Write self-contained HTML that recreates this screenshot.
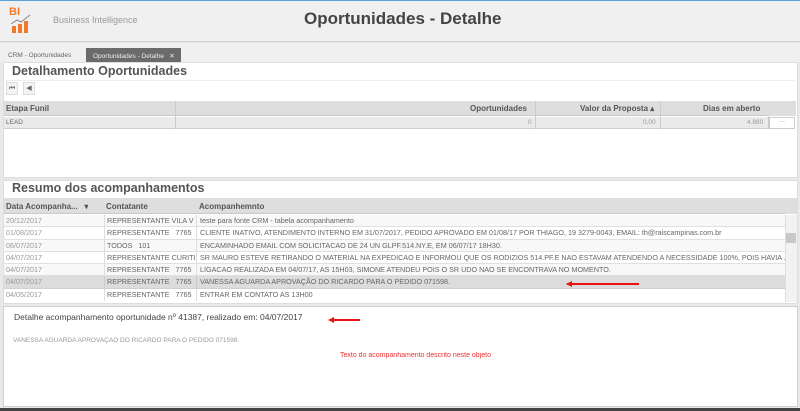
<!DOCTYPE html>
<html><head><meta charset="utf-8"><style>
*{margin:0;padding:0;box-sizing:border-box}
body{width:800px;height:411px;overflow:hidden;background:#e9e9e9;font-family:"Liberation Sans",sans-serif;position:relative;color:#666}
.a{position:absolute}
.t{font-size:7.5px;white-space:nowrap;overflow:hidden}
.r{display:flex;line-height:12px;white-space:nowrap;overflow:hidden}
.r span{overflow:hidden;flex-shrink:0}
.r span:last-child{flex-shrink:1;min-width:0}
</style></head><body>
<div class="a" style="left:0;top:0;width:800px;height:42px;background:#f0f0f0;border-top:1px solid #5aa0d8;border-bottom:1px solid #d0d0d0"></div>
<div class="a" style="left:9px;top:6px;font-size:11px;font-weight:bold;color:#f07a2a">BI</div>
<svg class="a" style="left:10px;top:12px" width="22" height="22" viewBox="0 0 22 22"><rect x="2" y="14" width="4" height="7" fill="#f07a2a"/><rect x="8" y="12" width="4" height="9" fill="#f07a2a"/><rect x="14" y="9" width="4" height="12" fill="#f07a2a"/><polyline points="1,12 7,8 11,10 20,3" fill="none" stroke="#888" stroke-width="1"/></svg>
<div class="a" style="left:53px;top:15px;font-size:9px;color:#999">Business Intelligence</div>
<div class="a" style="left:304px;top:9px;font-size:17px;font-weight:bold;color:#444">Oportunidades - Detalhe</div>
<div class="a" style="left:0;top:43px;width:800px;height:19px;background:#f0f0f0"></div>
<div class="a t" style="left:8px;top:52px;font-size:6.5px">CRM - Oportunidades</div>
<div class="a" style="left:86px;top:48px;width:95px;height:14px;background:#6b6b6b"></div>
<div class="a t" style="left:93px;top:52px;font-size:6.5px;color:#eee">Oportunidades - Detalhe &nbsp;&nbsp;✕</div>
<!-- panel1 -->
<div class="a" style="left:3px;top:62px;width:795px;height:116px;background:#fff;border:1px solid #ddd"></div>
<div class="a" style="left:12px;top:64px;font-size:12.5px;font-weight:bold;color:#555">Detalhamento Oportunidades</div>
<div class="a" style="left:5px;top:80px;width:790px;height:1px;background:#eee"></div>
<div class="a" style="left:6px;top:82px;width:12px;height:13px;border:1px solid #ddd;background:#f4f4f4;font-size:7px;text-align:center;line-height:11px">⏮</div>
<div class="a" style="left:23px;top:82px;width:12px;height:13px;border:1px solid #ddd;background:#f4f4f4;font-size:7px;text-align:center;line-height:11px">◀</div>
<div class="a" style="left:4px;top:101px;width:765px;height:15px;background:#dedede;border-bottom:1px solid #c8c8c8"></div>
<div class="a" style="left:4px;top:117px;width:765px;height:12px;background:#eaeaea;border-bottom:1px solid #d0d0d0"></div>
<div class="a" style="left:175px;top:101px;width:1px;height:28px;background:#ccc"></div>
<div class="a" style="left:535px;top:101px;width:1px;height:28px;background:#ccc"></div>
<div class="a" style="left:660px;top:101px;width:1px;height:28px;background:#ccc"></div>
<div class="a" style="left:768px;top:101px;width:1px;height:28px;background:#ccc"></div>
<div class="a" style="left:768px;top:101px;width:28px;height:15px;background:#dedede"></div>
<div class="a t" style="left:6px;top:104px;font-size:8px;font-weight:bold;color:#555">Etapa Funil</div>
<div class="a t" style="left:470px;top:104px;font-size:8px;font-weight:bold;color:#555">Oportunidades</div>
<div class="a t" style="left:580px;top:104px;font-size:8px;font-weight:bold;color:#555">Valor da Proposta ▴</div>
<div class="a t" style="left:703px;top:104px;font-size:8px;font-weight:bold;color:#555">Dias em aberto</div>
<div class="a t" style="left:6px;top:119px;font-size:6.5px">LEAD</div>
<div class="a t" style="left:528px;top:119px;font-size:6.5px;color:#999">0</div>
<div class="a t" style="left:643px;top:119px;font-size:6.5px;color:#999">0,00</div>
<div class="a t" style="left:747px;top:119px;font-size:6.5px;color:#999">4.880</div>
<div class="a" style="left:769px;top:117px;width:26px;height:12px;border:1px solid #ccc;background:#fff;font-size:6px;text-align:center;line-height:8px">···</div>
<!-- panel2 -->
<div class="a" style="left:3px;top:180px;width:795px;height:124px;background:#fff;border:1px solid #ddd"></div>
<div class="a" style="left:12px;top:181px;font-size:12.5px;font-weight:bold;color:#555">Resumo dos acompanhamentos</div>
<div class="a" style="left:4px;top:198px;width:781px;height:16px;background:#dedede;border-bottom:1px solid #c8c8c8"></div>
<div class="a" style="left:785px;top:198px;width:12px;height:16px;background:#dedede"></div>
<div class="a t" style="left:6px;top:202px;font-size:8px;font-weight:bold;color:#555">Data Acompanha... &nbsp;&nbsp;▾</div>
<div class="a t" style="left:106px;top:202px;font-size:8px;font-weight:bold;color:#555">Contatante</div>
<div class="a t" style="left:199px;top:202px;font-size:8px;font-weight:bold;color:#555">Acompanhemnto</div>
<div class="a" style="left:4px;top:215px;width:781px;height:87px;font-size:7.2px">
<div class="r" style="height:12.3px;border-bottom:1px solid #e0e0e0;background:#f8f8f8"><span style="width:100px;padding-left:2px;color:#999">20/12/2017</span><span style="width:92px;padding-left:2px;border-left:1px solid #ddd">REPRESENTANTE VILA V</span><span style="padding-left:3px;border-left:1px solid #ddd">teste para fonte CRM - tabela acompanhamento</span></div>
<div class="r" style="height:12.3px;border-bottom:1px solid #e0e0e0;background:#fff"><span style="width:100px;padding-left:2px;color:#999">01/08/2017</span><span style="width:92px;padding-left:2px;border-left:1px solid #ddd">REPRESENTANTE &nbsp; 7765</span><span style="padding-left:3px;border-left:1px solid #ddd">CLIENTE INATIVO, ATENDIMENTO INTERNO EM 31/07/2017, PEDIDO APROVADO EM 01/08/17 POR THIAGO, 19 3279-0043, EMAIL: th@raiscampinas.com.br</span></div>
<div class="r" style="height:12.3px;border-bottom:1px solid #e0e0e0;background:#f8f8f8"><span style="width:100px;padding-left:2px;color:#999">06/07/2017</span><span style="width:92px;padding-left:2px;border-left:1px solid #ddd">TODOS &nbsp; 101</span><span style="padding-left:3px;border-left:1px solid #ddd">ENCAMINHADO EMAIL COM SOLICITACAO DE 24 UN GLPF.514.NY.E, EM 06/07/17 18H30.</span></div>
<div class="r" style="height:12.3px;border-bottom:1px solid #e0e0e0;background:#fff"><span style="width:100px;padding-left:2px;color:#999">04/07/2017</span><span style="width:92px;padding-left:2px;border-left:1px solid #ddd">REPRESENTANTE CURITI</span><span style="padding-left:3px;border-left:1px solid #ddd">SR MAURO ESTEVE RETIRANDO O MATERIAL NA EXPEDICAO E INFORMOU QUE OS RODIZIOS 514.PF.E NAO ESTAVAM ATENDENDO A NECESSIDADE 100%, POIS HAVIA ...</span></div>
<div class="r" style="height:12.3px;border-bottom:1px solid #e0e0e0;background:#f8f8f8"><span style="width:100px;padding-left:2px;color:#999">04/07/2017</span><span style="width:92px;padding-left:2px;border-left:1px solid #ddd">REPRESENTANTE &nbsp; 7765</span><span style="padding-left:3px;border-left:1px solid #ddd">LIGACAO REALIZADA EM 04/07/17, AS 15H03, SIMONE ATENDEU POIS O SR UDO NAO SE ENCONTRAVA NO MOMENTO.</span></div>
<div class="r" style="height:13px;border-bottom:1px solid #d0d0d0;background:#dcdcdc"><span style="width:100px;padding-left:2px;color:#999">04/07/2017</span><span style="width:92px;padding-left:2px;border-left:1px solid #ccc">REPRESENTANTE &nbsp; 7765</span><span style="padding-left:3px;border-left:1px solid #ccc">VANESSA AGUARDA APROVAÇÃO DO RICARDO PARA O PEDIDO 071598.</span></div>
<div class="r" style="height:12px;background:#fff"><span style="width:100px;padding-left:2px;color:#999">04/05/2017</span><span style="width:92px;padding-left:2px;border-left:1px solid #ddd">REPRESENTANTE &nbsp; 7765</span><span style="padding-left:3px;border-left:1px solid #ddd">ENTRAR EM CONTATO AS 13H00</span></div>
</div>
<div class="a" style="left:785px;top:215px;width:12px;height:87px;background:#f2f2f2;border-left:1px solid #ddd"></div>
<div class="a" style="left:786px;top:233px;width:10px;height:10px;background:#c8c8c8"></div>
<div class="a" style="left:567px;top:283px;width:72px;height:1.5px;background:#e11"></div>
<div class="a" style="left:566px;top:281px;width:0;height:0;border-top:3px solid transparent;border-bottom:3px solid transparent;border-right:6px solid #e11"></div>
<!-- panel3 -->
<div class="a" style="left:3px;top:306px;width:795px;height:101px;background:#fff;border:1px solid #d0d0d0"></div>
<div class="a t" style="left:14px;top:312px;font-size:8.5px;color:#444">Detalhe acompanhamento oportunidade nº 41387, realizado em: 04/07/2017</div>
<div class="a" style="left:330px;top:319px;width:30px;height:1.5px;background:#e11"></div>
<div class="a" style="left:328px;top:317px;width:0;height:0;border-top:3px solid transparent;border-bottom:3px solid transparent;border-right:6px solid #e11"></div>
<div class="a t" style="left:13px;top:337px;font-size:6.5px;color:#999">VANESSA AGUARDA APROVAÇÃO DO RICARDO PARA O PEDIDO 071598.</div>
<div class="a t" style="left:340px;top:352px;font-size:7px;color:#f03030">Texto do acompanhamento descrito neste objeto</div>
<div class="a" style="left:0;top:408px;width:800px;height:3px;background:#444"></div>
</body></html>
